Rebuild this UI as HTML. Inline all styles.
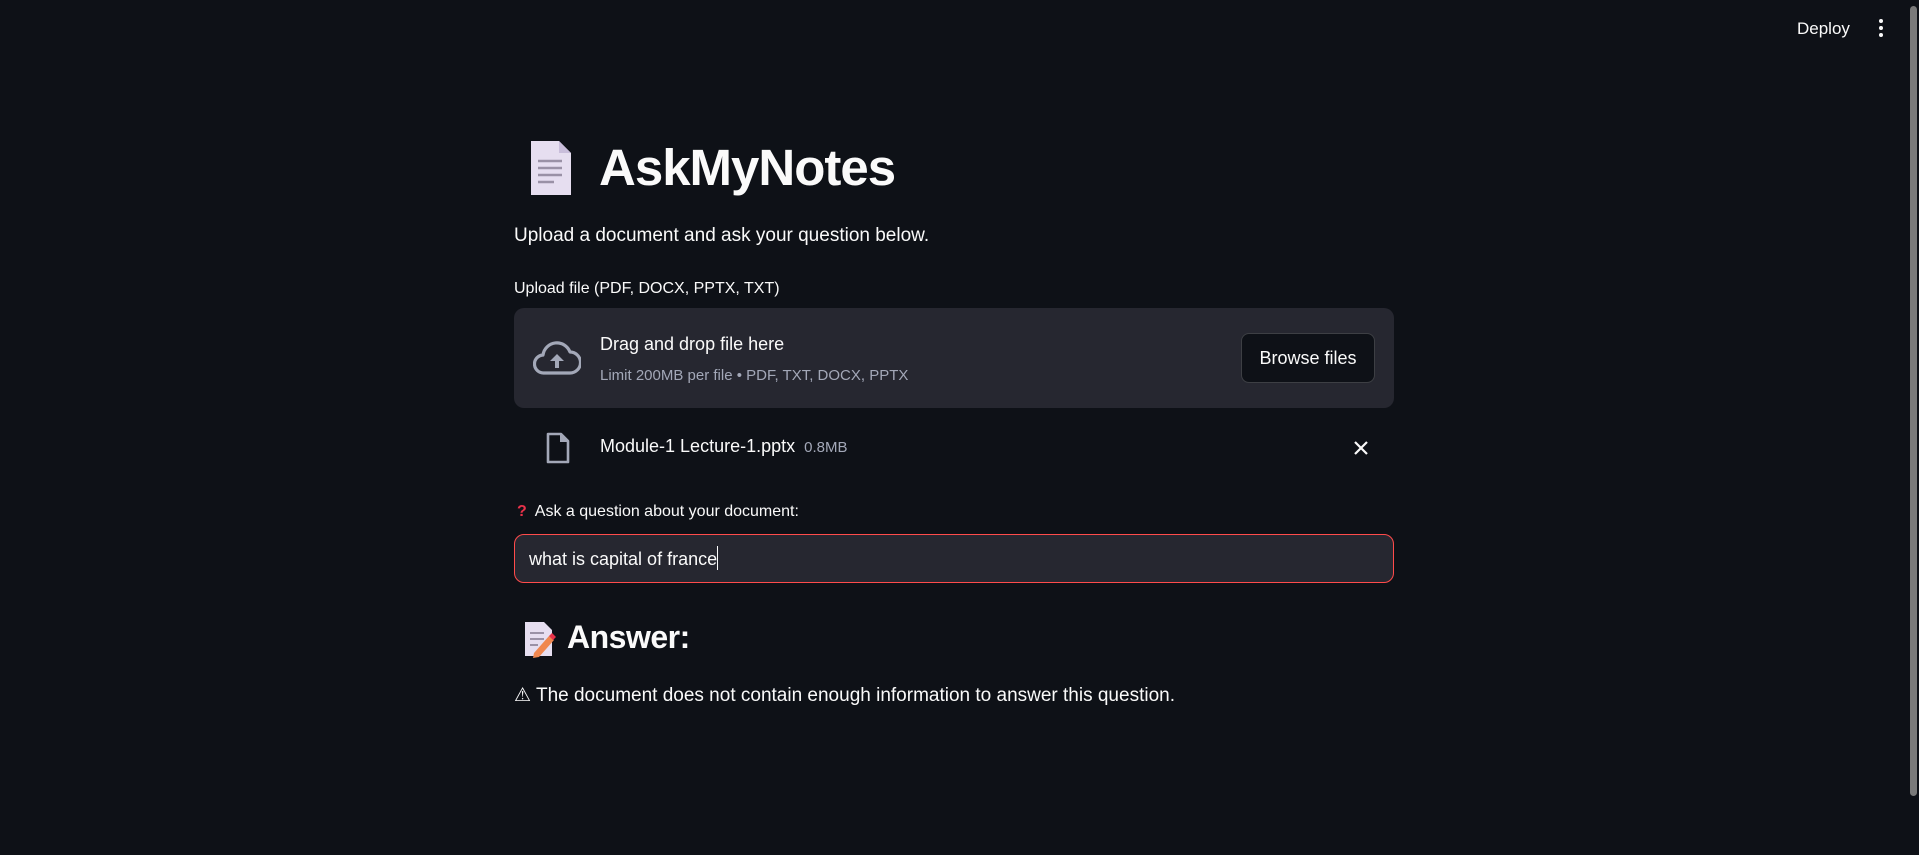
<!DOCTYPE html>
<html><head><meta charset="utf-8"><style>
*{margin:0;padding:0;box-sizing:border-box}
body{width:1919px;height:855px;background:#0e1117;color:#fafafa;font-family:"Liberation Sans","DejaVu Sans",sans-serif;position:relative;overflow:hidden}
.a{position:absolute;white-space:nowrap}
</style></head><body>
<div class="a" style="left:1797px;top:19px;font-size:17px">Deploy</div>
<div class="a" style="left:1879px;top:19px;width:4px">
<div style="width:4px;height:4px;border-radius:2px;background:#fafafa;margin-bottom:3px"></div>
<div style="width:4px;height:4px;border-radius:2px;background:#fafafa;margin-bottom:3px"></div>
<div style="width:4px;height:4px;border-radius:2px;background:#fafafa"></div></div>
<div class="a" style="left:1910px;top:6px;width:7px;height:790px;border-radius:4px;background:#7a7a7a"></div>

<svg class="a" style="left:528px;top:139px" width="46" height="58" viewBox="0 0 46 58"><path d="M3 2h28l12 12v42H3z" fill="#e6def0"/><path d="M31 2v12h12z" fill="#c9bedb"/><g stroke="#9a91a6" stroke-width="2.5"><line x1="10" y1="22" x2="34" y2="22"/><line x1="10" y1="29" x2="34" y2="29"/><line x1="10" y1="36" x2="34" y2="36"/><line x1="10" y1="43" x2="26" y2="43"/></g></svg>
<div class="a" style="left:599px;top:138px;font-size:51px;font-weight:bold;letter-spacing:-1px">AskMyNotes</div>
<div class="a" style="left:514px;top:225px;font-size:19px">Upload a document and ask your question below.</div>
<div class="a" style="left:514px;top:280px;font-size:16px">Upload file (PDF, DOCX, PPTX, TXT)</div>

<div class="a" style="left:514px;top:308px;width:880px;height:100px;background:#262730;border-radius:10px"></div>
<svg class="a" style="left:533px;top:340px" width="48" height="36" viewBox="0 0 48 36"><path d="M12 33H11A9 9 0 0 1 10 15A14 14 0 0 1 37 12A10.5 10.5 0 0 1 37 33Z" fill="none" stroke="#a3a8b8" stroke-width="3.2" stroke-linejoin="round"/><path d="M24 14l-7 7h5v7h4v-7h5z" fill="#a3a8b8"/></svg>
<div class="a" style="left:600px;top:334px;font-size:18px">Drag and drop file here</div>
<div class="a" style="left:600px;top:367px;font-size:15px;color:#a3a8b8">Limit 200MB per file • PDF, TXT, DOCX, PPTX</div>
<div class="a" style="left:1241px;top:333px;width:134px;height:50px;border:1px solid rgba(250,250,250,.2);border-radius:8px;background:#0e1117;font-size:18px;text-align:center;line-height:48px">Browse files</div>

<svg class="a" style="left:544px;top:432px" width="28" height="32" viewBox="0 0 28 32"><path d="M4 2h13l7 7v21H4z" fill="none" stroke="#a3a8b8" stroke-width="2.6" stroke-linejoin="round"/><path d="M16 2v8h8" fill="#a3a8b8"/></svg>
<div class="a" style="left:600px;top:436px;font-size:18px">Module-1 Lecture-1.pptx <span style="font-size:15px;color:#a3a8b8;margin-left:4px">0.8MB</span></div>
<svg class="a" style="left:1353px;top:440px" width="16" height="16" viewBox="0 0 16 16"><path d="M2 2L14 14M14 2L2 14" stroke="#fafafa" stroke-width="2.2"/></svg>

<div class="a" style="left:517px;top:503px;font-size:16px"><span style="color:#e8324a;font-weight:bold;margin-right:8px">?</span>Ask a question about your document:</div>
<div class="a" style="left:514px;top:534px;width:880px;height:49px;border:1px solid #ff4b4b;border-radius:10px;background:#262730"></div>
<div class="a" style="left:529px;top:546px;font-size:18px">what is capital of france<span style="display:inline-block;width:1px;height:24px;background:#fafafa;vertical-align:-5px"></span></div>

<svg class="a" style="left:522px;top:620px" width="34" height="38" viewBox="0 0 34 38"><path d="M3 2h19l8 8v26H3z" fill="#e6def0"/><g stroke="#9a91a6" stroke-width="2"><line x1="8" y1="13" x2="22" y2="13"/><line x1="8" y1="19" x2="22" y2="19"/><line x1="8" y1="25" x2="16" y2="25"/></g><path d="M12 33l15-17 5 4-15 17-6 1z" fill="#f0874f"/><path d="M27 16l3-3 4 4-3 3z" fill="#e8324a"/></svg>
<div class="a" style="left:567px;top:619px;font-size:32px;font-weight:bold;letter-spacing:-0.5px">Answer:</div>
<div class="a" style="left:514px;top:684px;font-size:19px">⚠ The document does not contain enough information to answer this question.</div>
</body></html>
